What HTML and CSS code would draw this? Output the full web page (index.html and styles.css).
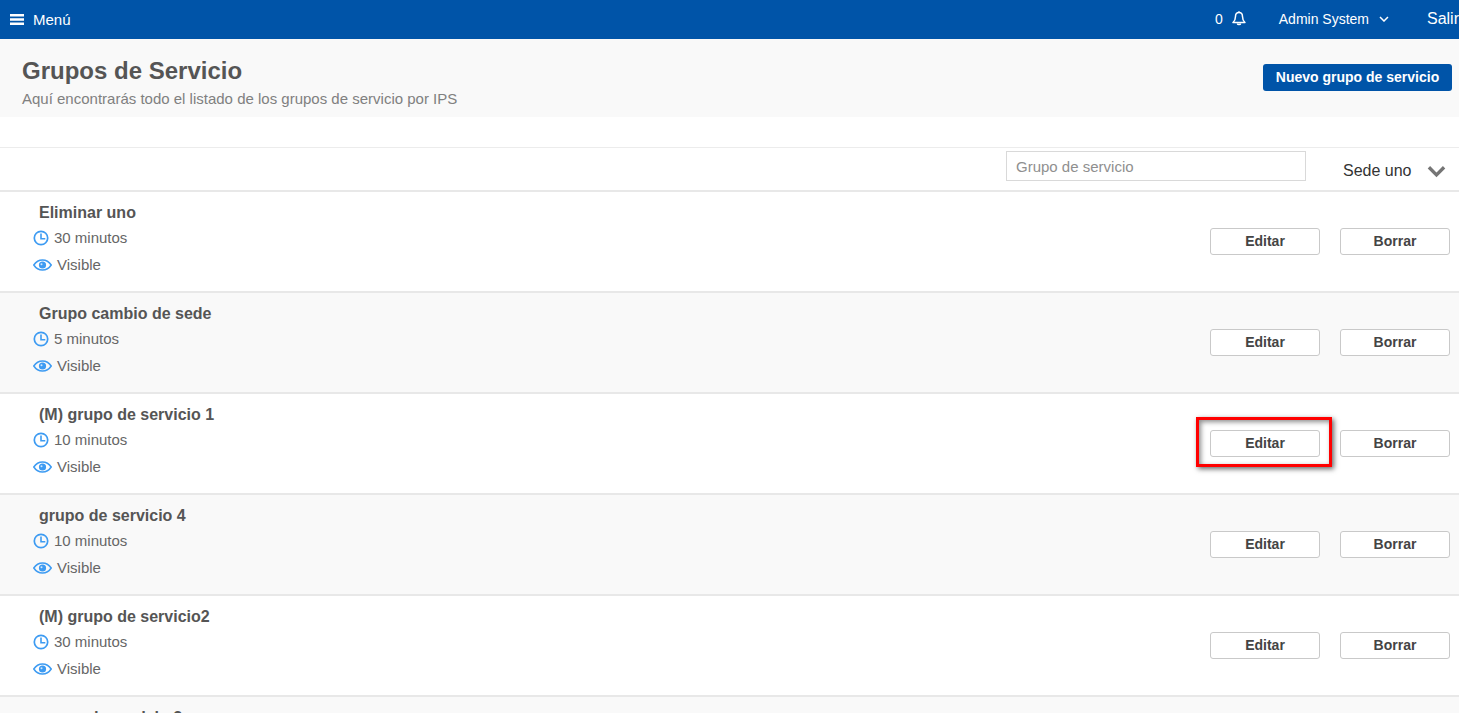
FILE: index.html
```html
<!DOCTYPE html>
<html lang="es">
<head>
<meta charset="utf-8">
<title>Grupos de Servicio</title>
<link rel="stylesheet" href="styles.css">
</head>
<body>
<svg class="defs" width="0" height="0" aria-hidden="true">
  <symbol id="clock" viewBox="0 0 16 16"><circle cx="8" cy="8" r="6.700" fill="none" stroke="#3d9bf2" stroke-width="1.700"/><path d="M8 3.500V8.800H12.300" fill="none" stroke="#3d9bf2" stroke-width="1.600"/></symbol>
  <symbol id="eye" viewBox="0 0 19 12"><path d="M.8 6C3 2.600 6 .9 9.500.9S16 2.600 18.200 6C16 9.400 13 11.100 9.500 11.100S3 9.400.8 6z" fill="none" stroke="#3d9bf2" stroke-width="1.500"/><circle cx="9.500" cy="6" r="3.600" fill="#3d9bf2"/><circle cx="8.500" cy="5.300" r="1" fill="#cfe6fb"/></symbol>
</svg>
<header class="topbar">
  <div class="menu">
    <svg class="ic-menu" viewBox="0 0 14 11" width="14" height="11"><path d="M0 1.300h14M0 5.500h14M0 9.700h14" stroke="#fff" stroke-width="2.400" fill="none"/></svg>
    <span>Menú</span>
  </div>
  <div class="top-right">
    <span class="count">0</span>
    <svg class="ic-bell" viewBox="0 0 14 15" width="14" height="15"><path d="M7 1.500C4.800 1.500 3.500 3.300 3.500 5.500c0 3-1 4.700-2.500 6h12c-1.500-1.300-2.500-3-2.500-6 0-2.200-1.300-4-3.500-4z" fill="none" stroke="#fff" stroke-width="1.500" stroke-linejoin="round"/><path d="M7 .3v1.500M5.300 12.500c.3 1.300 3.100 1.300 3.400 0" fill="none" stroke="#fff" stroke-width="1.400"/></svg>
    <span class="user">Admin System</span>
    <svg class="ic-caret" viewBox="0 0 10 6" width="10" height="6"><path d="M1 1l4 4 4-4" fill="none" stroke="#fff" stroke-width="1.500"/></svg>
    <span class="logout">Salir</span>
  </div>
</header>

<section class="page-head">
  <div>
    <h1>Grupos de Servicio</h1>
    <p>Aquí encontrarás todo el listado de los grupos de servicio por IPS</p>
  </div>
  <button class="btn-primary">Nuevo grupo de servicio</button>
</section>

<div class="toolbar">
  <input class="search" type="text" placeholder="Grupo de servicio">
  <div class="sede">
    <span>Sede uno</span>
    <svg viewBox="0 0 20 13" width="19" height="13"><path d="M2 2l8 8 8-8" fill="none" stroke="#757575" stroke-width="3.500"/></svg>
  </div>
</div>

<main class="list">
  <article class="row">
    <div class="info">
      <h2>Eliminar uno</h2>
      <div class="meta"><svg class="ic-clock"><use href="#clock"/></svg><span>30 minutos</span></div>
      <div class="meta meta-eye"><svg class="ic-eye"><use href="#eye"/></svg><span>Visible</span></div>
    </div>
    <div class="actions"><button class="btn">Editar</button><button class="btn">Borrar</button></div>
  </article>

  <article class="row alt">
    <div class="info">
      <h2>Grupo cambio de sede</h2>
      <div class="meta"><svg class="ic-clock"><use href="#clock"/></svg><span>5 minutos</span></div>
      <div class="meta meta-eye"><svg class="ic-eye"><use href="#eye"/></svg><span>Visible</span></div>
    </div>
    <div class="actions"><button class="btn">Editar</button><button class="btn">Borrar</button></div>
  </article>

  <article class="row">
    <div class="info">
      <h2>(M) grupo de servicio 1</h2>
      <div class="meta"><svg class="ic-clock"><use href="#clock"/></svg><span>10 minutos</span></div>
      <div class="meta meta-eye"><svg class="ic-eye"><use href="#eye"/></svg><span>Visible</span></div>
    </div>
    <div class="actions"><div class="highlight"><button class="btn">Editar</button></div><button class="btn">Borrar</button></div>
  </article>

  <article class="row alt">
    <div class="info">
      <h2>grupo de servicio 4</h2>
      <div class="meta"><svg class="ic-clock"><use href="#clock"/></svg><span>10 minutos</span></div>
      <div class="meta meta-eye"><svg class="ic-eye"><use href="#eye"/></svg><span>Visible</span></div>
    </div>
    <div class="actions"><button class="btn">Editar</button><button class="btn">Borrar</button></div>
  </article>

  <article class="row">
    <div class="info">
      <h2>(M) grupo de servicio2</h2>
      <div class="meta"><svg class="ic-clock"><use href="#clock"/></svg><span>30 minutos</span></div>
      <div class="meta meta-eye"><svg class="ic-eye"><use href="#eye"/></svg><span>Visible</span></div>
    </div>
    <div class="actions"><button class="btn">Editar</button><button class="btn">Borrar</button></div>
  </article>

  <article class="row alt">
    <div class="info">
      <h2>grupo de modelo 3</h2>
    </div>
  </article>
</main>
</body>
</html>
```
FILE: styles.css
```css
*, *::before, *::after { box-sizing: border-box; }
html, body { margin: 0; height: 713px; overflow: hidden; }
body { font-family: "Liberation Sans", Arial, sans-serif; color: #555; background: #fff; }
.defs { position: absolute; }

.topbar { height: 39px; background: #0054a8; color: #fff; display: flex; justify-content: space-between; align-items: center; font-size: 14px; }
.menu { display: flex; align-items: center; padding-left: 10px; font-size: 15px; }
.ic-menu { margin-right: 9px; }
.top-right { display: flex; align-items: center; width: 244px; flex: none; padding-bottom: 2px; overflow: hidden; white-space: nowrap; }
.ic-bell { margin-left: 9px; }
.user { margin-left: 33px; }
.ic-caret { margin-left: 10px; }
.logout { margin-left: 38px; font-size: 16px; }

.page-head { height: 78px; background: #f9f9f9; display: flex; justify-content: space-between; padding: 18px 7px 0 22px; }
.page-head h1 { margin: 0; font-size: 24px; line-height: 27px; font-weight: 700; color: #555; }
.page-head p { margin: 6px 0 0; font-size: 15px; line-height: 17px; color: #808080; }
.btn-primary { height: 27px; width: 189px; margin-top: 7px; padding: 0 0 2px; background: #0054a8; border: 0; border-radius: 3px; color: #fff; font: 700 14px "Liberation Sans", Arial, sans-serif; }

.toolbar { margin-top: 30px; height: 45px; border-top: 1px solid #ececec; border-bottom: 2px solid #e8e8e8; display: flex; align-items: flex-start; padding-left: 1006px; }
.search { width: 300px; height: 30px; margin-top: 3px; border: 1px solid #d9d9d9; padding: 1px 9px 0; font: 15px "Liberation Sans", Arial, sans-serif; color: #555; background: #fff; outline: 0; }
.search::placeholder { color: #8f8f8f; opacity: 1; }
.sede { display: flex; align-items: center; margin-left: 37px; margin-top: 14px; font-size: 16px; line-height: 18px; color: #333; }
.sede svg { margin-left: 15px; margin-top: 1px; }

.row { height: 101px; border-bottom: 2px solid #e8e8e8; display: flex; justify-content: space-between; background: #fff; }
.row.alt { background: #f9f9f9; }
.info { padding: 11px 0 0 33px; }
.info h2 { margin: 0 0 0 6px; font-size: 16px; line-height: 19px; font-weight: 700; color: #555; }
.meta { display: flex; align-items: center; font-size: 15px; line-height: 18px; color: #666; margin-top: 7px; }
.meta-eye { margin-top: 9px; }
.ic-clock { width: 16px; height: 16px; margin-right: 5px; }
.ic-eye { width: 19px; height: 12px; margin-right: 5px; }
.actions { display: flex; align-items: flex-start; padding: 36px 9px 0 0; gap: 20px; }
.btn { display: block; width: 110px; height: 27px; padding: 0 0 2px; background: #fff; border: 1px solid #c9c9c9; border-radius: 3px; color: #444; font: 700 14px "Liberation Sans", Arial, sans-serif; }
.highlight { position: relative; }
.highlight::after { content: ""; position: absolute; left: -14px; top: -13px; width: 136px; height: 50px; border: 3px solid #ff0000; box-shadow: 2px 2px 5px rgba(0,0,0,.6), inset 2px 2px 5px rgba(0,0,0,.45); pointer-events: none; }
```
